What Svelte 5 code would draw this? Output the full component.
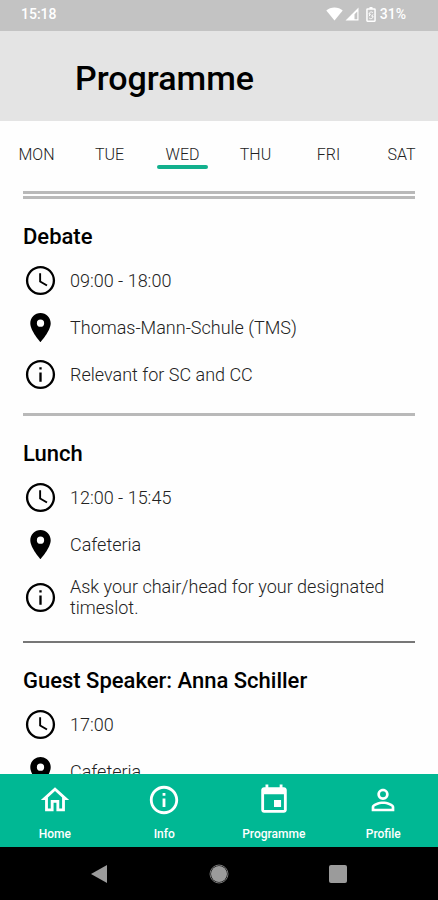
<script lang="ts">
  type Detail = { icon: 'clock' | 'pin' | 'info'; text: string };
  type Session = { title: string; details: Detail[] };

  const days = ['MON', 'TUE', 'WED', 'THU', 'FRI', 'SAT'];

  const sessions: Session[] = [
    {
      title: 'Debate',
      details: [
        { icon: 'clock', text: '09:00 - 18:00' },
        { icon: 'pin', text: 'Thomas-Mann-Schule (TMS)' },
        { icon: 'info', text: 'Relevant for SC and CC' },
      ],
    },
    {
      title: 'Lunch',
      details: [
        { icon: 'clock', text: '12:00 - 15:45' },
        { icon: 'pin', text: 'Cafeteria' },
        { icon: 'info', text: 'Ask your chair/head for your designated timeslot.' },
      ],
    },
    {
      title: 'Guest Speaker: Anna Schiller',
      details: [
        { icon: 'clock', text: '17:00' },
        { icon: 'pin', text: 'Cafeteria' },
      ],
    },
  ];

  const icons = {
    clock:
      'M11.99 2C6.47 2 2 6.48 2 12s4.47 10 9.99 10C17.52 22 22 17.52 22 12S17.52 2 11.99 2zM12 20.4a8.4 8.4 0 1 1 0-16.8 8.4 8.4 0 0 1 0 16.8zM12.4 7H11.1v6l5 3 .7-1.1-4.4-2.6z',
    pin: 'M12 2C8.13 2 5 5.13 5 9c0 5.25 7 13 7 13s7-7.75 7-13c0-3.87-3.13-7-7-7zm0 9.5a2.5 2.5 0 0 1 0-5 2.5 2.5 0 0 1 0 5z',
    info: 'M11.2 7h1.6v1.6h-1.6zM11.2 10.6h1.6V17h-1.6zM12 2C6.48 2 2 6.48 2 12s4.48 10 10 10 10-4.48 10-10S17.52 2 12 2zm0 18.4a8.4 8.4 0 1 1 0-16.8 8.4 8.4 0 0 1 0 16.8z',
  };

  const pages = [
    {
      label: 'Home',
      path: 'M12 5.69l5 4.5V18h-2v-6H9v6H7v-7.81l5-4.5M12 3L2 12h3v8h6v-6h2v6h6v-8h3L12 3z',
    },
    {
      label: 'Info',
      path: 'M11 7h2v2h-2zm0 4h2v6h-2zm1-9C6.48 2 2 6.48 2 12s4.48 10 10 10 10-4.48 10-10S17.52 2 12 2zm0 18c-4.41 0-8-3.59-8-8s3.59-8 8-8 8 3.59 8 8-3.59 8-8 8z',
    },
    {
      label: 'Programme',
      path: 'M17 12h-5v5h5v-5zM16 1v2H8V1H6v2H5c-1.11 0-2 .9-2 2v14c0 1.1.89 2 2 2h14c1.1 0 2-.9 2-2V5c0-1.1-.9-2-2-2h-1V1h-2zm3 18H5V8h14v11z',
    },
    {
      label: 'Profile',
      path: 'M12 5.9a2.1 2.1 0 1 1 0 4.2 2.1 2.1 0 0 1 0-4.2m0 9c2.97 0 6.1 1.46 6.1 2.1v1.1H5.9V17c0-.64 3.13-2.1 6.1-2.1M12 4C9.79 4 8 5.79 8 8s1.79 4 4 4 4-1.79 4-4-1.79-4-4-4zm0 9c-2.67 0-8 1.34-8 4v3h16v-3c0-2.66-5.33-4-8-4z',
    },
  ];

  let activeDay = $state('WED');
  let activePage = $state('Programme');
</script>

<div class="app">
  <div class="status">
    <span>15:18</span>
    <div class="status-icons">
      <svg width="17" height="14" viewBox="0 0 17 14" aria-hidden="true">
        <path d="M8.5 13.5L.3 3.6C2.4 1.6 5.4.6 8.5.6s6.100 1 8.200 3z" />
      </svg>
      <svg width="14" height="14" viewBox="0 0 14 14" aria-hidden="true">
        <path d="M13.5.5v13H.5zM12.3 4.500L9.500 7.300v5h2.800z" fill-rule="evenodd" />
      </svg>
      <svg class="battery" width="10" height="15" viewBox="0 0 10 15" aria-hidden="true">
        <path
          d="M3.5 0h3v1.3h2a1.3 1.3 0 0 1 1.3 1.3v11a1.3 1.3 0 0 1-1.3 1.3h-7a1.3 1.3 0 0 1-1.3-1.3v-11a1.3 1.3 0 0 1 1.3-1.3h2zM1.700 2.800v10.600h6.600V2.800z"
          fill-rule="evenodd"
        />
        <path
          d="M6.9 5.600A2.300 2.300 0 0 0 3 7.200h1.400L3 9.200M3.200 11a2.300 2.300 0 0 0 3.900-1.800H5.600L7 7.400"
          fill="none"
          stroke="currentColor"
        />
      </svg>
      <span>31%</span>
    </div>
  </div>

  <header>
    <h1>Programme</h1>
  </header>

  <main>
    <div class="days">
      {#each days as day}
        <button
          class="day"
          class:active={day === activeDay}
          aria-pressed={day === activeDay}
          onclick={() => (activeDay = day)}
        >
          {day}
        </button>
      {/each}
    </div>

    <div class="sessions">
      {#each sessions as session}
        <section>
          <h2>{session.title}</h2>
          {#each session.details as detail}
            <div class="detail">
              <svg width="35" height="35" viewBox="0 0 24 24" aria-hidden="true">
                <path d={icons[detail.icon]} fill-rule="evenodd" />
              </svg>
              <p>{detail.text}</p>
            </div>
          {/each}
        </section>
      {/each}
    </div>
  </main>

  <nav>
    {#each pages as page}
      <button
        aria-current={page.label === activePage ? 'page' : undefined}
        onclick={() => (activePage = page.label)}
      >
        <svg width="34" height="34" viewBox="0 0 24 24" aria-hidden="true">
          <path d={page.path} />
        </svg>
        <span>{page.label}</span>
      </button>
    {/each}
  </nav>

  <div class="system">
    <button aria-label="Back">
      <svg width="20" height="20" viewBox="0 0 20 20">
        <path d="M1 10L17 1v18z" />
      </svg>
    </button>
    <button aria-label="Home screen">
      <svg width="22" height="22" viewBox="0 0 22 22">
        <circle cx="11" cy="11" r="8" />
        <circle class="ring" cx="11" cy="11" r="9" />
      </svg>
    </button>
    <button aria-label="Recent apps">
      <svg width="20" height="20" viewBox="0 0 20 20">
        <rect x="1" y="1" width="18" height="18" rx="2" />
      </svg>
    </button>
  </div>
</div>

<style>
  :global(body) {
    margin: 0;
  }

  .app {
    display: flex;
    flex-direction: column;
    height: 100vh;
    overflow: hidden;
    background: #fefefe;
    color: #000;
    font-family: Roboto, sans-serif;
  }

  svg {
    display: block;
    flex-shrink: 0;
    fill: currentColor;
  }

  button {
    padding: 0;
    border: 0;
    background: none;
    color: inherit;
    font: inherit;
    cursor: pointer;
  }

  /* Status bar */
  .status {
    display: flex;
    align-items: center;
    justify-content: space-between;
    flex-shrink: 0;
    height: 31px;
    padding: 0 32px 3px 21px;
    box-sizing: border-box;
    background: #c3c3c3;
    color: #fff;
    font-size: 14px;
    font-weight: 500;
  }

  .status-icons {
    display: flex;
    align-items: center;
    gap: 2px;
  }

  .battery {
    margin: 0 2px 0 5px;
  }

  header {
    flex-shrink: 0;
    padding: 27px 75px 23px;
    background: #e4e4e4;
  }

  h1 {
    margin: 0;
    font-size: 34px;
    font-weight: 500;
    line-height: 40px;
  }

  main {
    flex: 1;
    min-height: 0;
    overflow: hidden;
  }

  /* Day picker */
  .days {
    display: grid;
    grid-template-columns: repeat(6, 1fr);
    justify-items: center;
    padding: 24px 0 22px;
  }

  .day {
    width: 51px;
    color: #222;
    font-size: 16px;
    font-weight: 300;
    line-height: 20px;
  }

  .day::after {
    content: '';
    display: block;
    height: 4px;
    border-radius: 2px;
  }

  .day.active::after {
    background: #12b08d;
  }

  .sessions {
    padding: 0 23px;
  }

  .sessions::before {
    content: '';
    display: block;
    height: 2px;
    border: solid #b9b9b9;
    border-width: 3px 0;
  }

  section {
    padding: 23px 0 15px;
    border-bottom: 3px solid #b9b9b9;
  }

  section:nth-child(even) {
    border-bottom: 2px solid #777;
  }

  h2 {
    margin: 0 0 5px;
    font-size: 22px;
    font-weight: 500;
    line-height: 30px;
  }

  .detail {
    display: flex;
    align-items: center;
    gap: 12px;
    padding: 6px 0;
  }

  p {
    margin: 0;
    padding: 2px 0;
    color: #222;
    font-size: 18px;
    font-weight: 300;
    line-height: 21px;
  }

  /* Bottom navigation */
  nav {
    display: grid;
    grid-template-columns: repeat(4, 1fr);
    flex-shrink: 0;
    padding: 9px 0 5px;
    background: #00b894;
    color: #fff;
  }

  nav button {
    display: flex;
    flex-direction: column;
    align-items: center;
    gap: 9px;
    font-size: 12px;
    font-weight: 500;
    line-height: 16px;
  }

  /* Android buttons */
  .system {
    display: flex;
    align-items: center;
    justify-content: center;
    gap: 98px;
    flex-shrink: 0;
    height: 53px;
    background: #000;
    color: #9b9b9b;
  }

  .ring {
    fill: none;
    stroke: #777;
  }
</style>
